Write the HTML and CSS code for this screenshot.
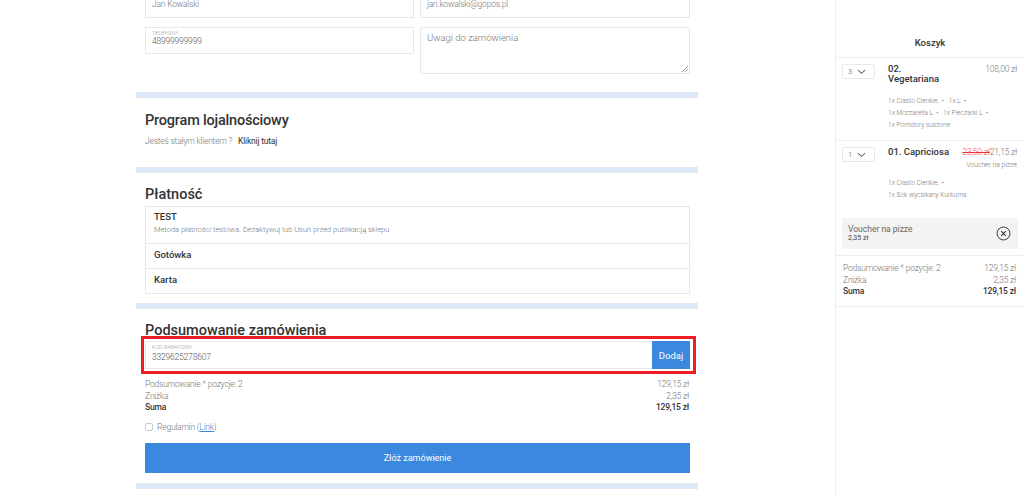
FILE: index.html
```html
<!DOCTYPE html>
<html lang="pl">
<head>
<meta charset="utf-8">
<title>Zamówienie</title>
<link rel="stylesheet" href="styles.css">
</head>
<body>
<div class="page">
  <main class="main">
    <section class="section contact">
      <div class="form-grid">
        <div class="field first"><span class="value">Jan Kowalski</span></div>
        <div class="field first"><span class="value">jan.kowalski@gopos.pl</span></div>
        <div class="field phone"><span class="mini">TELEFON*</span><span class="value dark">48999999999</span></div>
        <div class="field notes">Uwagi do zamówienia
          <svg class="grip" viewBox="0 0 6 6" width="6" height="6"><path d="M0 6L6 0M3 6L6 3" stroke="#999" stroke-width="1" fill="none"/></svg>
        </div>
      </div>
    </section>
    <div class="bar"></div>
    <section class="section loyalty">
      <h2>Program lojalnościowy</h2>
      <p class="loyal-line">Jesteś stałym klientem ? <a class="loyal-link">Kliknij tutaj</a></p>
    </section>
    <div class="bar"></div>
    <section class="section payment">
      <h2>Płatność</h2>
      <div class="pay-box">
        <div class="pay-row pay-test"><strong>TEST</strong><span>Metoda płatności testowa. Dezaktywuj lub Usuń przed publikacją sklepu</span></div>
        <div class="pay-row"><strong>Gotówka</strong></div>
        <div class="pay-row pay-last"><strong>Karta</strong></div>
      </div>
    </section>
    <div class="bar"></div>
    <section class="section summary">
      <h2>Podsumowanie zamówienia</h2>
      <div class="code-frame">
        <div class="code-row">
          <div class="code-input"><span class="mini">KOD RABATOWY</span><span class="value dark code-value">3329625278607</span></div>
          <button class="add">Dodaj</button>
        </div>
      </div>
      <div class="totals">
        <div class="line"><span>Podsumowanie * pozycje: 2</span><span>129,15 zł</span></div>
        <div class="line"><span>Zniżka</span><span>2,35 zł</span></div>
        <div class="line total"><span>Suma</span><span>129,15 zł</span></div>
      </div>
      <div class="terms"><span class="check"></span>Regulamin (<a class="link">Link</a>)</div>
      <button class="submit">Złóż zamówienie</button>
    </section>
    <div class="bar"></div>
  </main>
  <aside class="cart">
    <h3>Koszyk</h3>
    <div class="item item-one">
      <div class="qty"><span>3</span><svg viewBox="0 0 10 6" width="9" height="6"><path d="M1 1l4 3.5L9 1" fill="none" stroke="#666" stroke-width="1.2"/></svg></div>
      <div class="item-body">
        <div class="item-head"><b>02.<br>Vegetariana</b><span class="price">108,00 zł</span></div>
        <div class="mods">
          <div>1x Ciasto Cienkie, &nbsp;•&nbsp; &nbsp;1x L &nbsp;•</div>
          <div>1x Mozzarella L &nbsp;•&nbsp; &nbsp;1x Pieczarki L &nbsp;•</div>
          <div>1x Pomidory suszone</div>
        </div>
      </div>
    </div>
    <div class="item item-two">
      <div class="qty"><span>1</span><svg viewBox="0 0 10 6" width="9" height="6"><path d="M1 1l4 3.5L9 1" fill="none" stroke="#666" stroke-width="1.2"/></svg></div>
      <div class="item-body">
        <div class="item-head"><b>01. Capriciosa</b><span class="price"><s>23,50 zł</s>21,15 zł<small>Voucher na pizze</small></span></div>
        <div class="mods">
          <div>1x Ciasto Cienkie, &nbsp;•</div>
          <div>1x Sok wyciskany Kurkuma</div>
        </div>
      </div>
    </div>
    <div class="voucher">
      <div><div class="v-name">Voucher na pizze</div><div class="v-val">2,35 zł</div></div>
      <svg viewBox="0 0 16 16" width="15" height="15"><circle cx="8" cy="8" r="6.9" fill="none" stroke="#333" stroke-width="1"/><path d="M5.5 5.5l5 5M10.5 5.5l-5 5" stroke="#333" stroke-width="1.1"/></svg>
    </div>
    <div class="cart-totals">
      <div class="line"><span>Podsumowanie * pozycje: 2</span><span>129,15 zł</span></div>
      <div class="line"><span>Zniżka</span><span>2,35 zł</span></div>
      <div class="line total"><span>Suma</span><span>129,15 zł</span></div>
    </div>
  </aside>
</div>
</body>
</html>
```
FILE: styles.css
```css
* { box-sizing: border-box; }
html, body { margin: 0; height: 495px; overflow: hidden; background: #fff; }
body { font-family: Roboto, "Open Sans", sans-serif; font-size: 8.5px; font-weight: 300; color: #666; letter-spacing: -0.2px; }
.page { display: flex; align-items: flex-start; height: 495px; padding-left: 136px; }
.main { width: 562px; margin-top: -22px; flex: none; }
.section { padding: 0 8px 0 9px; }
.bar { height: 6px; background: #dde7f6; }
h2 { margin: 0; font-size: 14.5px; font-weight: 500; color: #333; line-height: 18px; letter-spacing: 0; }

.contact { height: 114px; padding-top: 10px; }
.form-grid { display: grid; grid-template-columns: 269px 270px; column-gap: 6px; row-gap: 9px; align-items: start; }
.field { border: 1px solid #e8e8e8; background: #fff; display: flex; flex-direction: column; position: relative; }
.first { height: 30px; padding: 9px 6px 0; }
.first .value { line-height: 12px; }
.phone { height: 27px; padding: 2px 6px; }
.notes { height: 47px; padding: 4px 6px; font-size: 9.5px; color: #777; border-radius: 2px; letter-spacing: 0; }
.grip { position: absolute; right: 1px; bottom: 1px; }
.mini { font-size: 5.5px; line-height: 6px; color: #999; letter-spacing: 0; }
.value { color: #777; }
.value.dark { color: #555; line-height: 10px; }
.code-value { margin-top: 2px; }

.loyalty { height: 69px; padding-top: 14px; }
.loyalty h2 { letter-spacing: -0.2px; }
.loyal-line { margin: 5px 0 0; line-height: 12px; color: #777; }
.loyal-link { color: #333; font-weight: 400; margin-left: 4px; }

.payment { height: 130px; padding-top: 13px; }
.pay-box { border: 1px solid #e8e8e8; margin-top: 2px; }
.pay-row { padding: 0 8px 3px; height: 25px; border-bottom: 1px solid #e8e8e8; display: flex; flex-direction: column; justify-content: center; }
.pay-row strong { font-weight: 500; font-size: 9.5px; color: #333; line-height: 12px; letter-spacing: 0; }
.pay-row span { font-size: 7.5px; line-height: 14px; color: #777; letter-spacing: 0; }
.pay-test { height: 37px; padding-bottom: 2px; }
.pay-last { height: 24px; padding-bottom: 2px; border-bottom: 0; }

.summary { height: 174px; padding-top: 13px; }
.code-frame { margin: -4px -6px 0 -4px; border: 3px solid #ee1c25; padding: 2px 3px 2px 1px; height: 38px; }
.code-row { display: flex; height: 28px; border: 1px solid #e8e8e8; }
.code-input { flex: 1; display: flex; flex-direction: column; padding: 2px 6px; }
.add { width: 38px; border: 0; background: #3a89de; color: #fff; font: 400 9.5px Roboto, sans-serif; margin: -1px -1px -1px 0; }
.totals { margin-top: 5px; padding-right: 1px; }
.line { display: flex; justify-content: space-between; line-height: 11.5px; color: #777; }
.total { color: #333; font-weight: 500; }
.terms { display: flex; align-items: center; margin-top: 7px; color: #777; line-height: 12px; }
.check { width: 8px; height: 8px; border: 1px solid #ccc; border-radius: 2px; margin-right: 4px; }
.link { color: #3a89de; text-decoration: underline; }
.submit { display: block; width: 100%; height: 30px; margin-top: 10px; border: 0; background: #3a89de; color: #fff; font: 400 9px Roboto, sans-serif; }

.cart { margin-left: 137px; width: 189px; height: 495px; border-left: 1px solid #e8eef6; flex: none; }
h3 { margin: 0; height: 58px; padding-top: 36px; line-height: 13px; text-align: center; font-size: 9.5px; font-weight: 500; color: #333; border-bottom: 1px solid #e8eef6; letter-spacing: 0; }
.item { display: flex; padding: 6px 7px 0 6px; }
.item-one { height: 83px; border-bottom: 1px solid #e8eef6; }
.item-two { height: 77px; }
.qty { width: 33px; height: 15px; border: 1px solid #e8e8e8; border-radius: 2px; display: flex; align-items: center; justify-content: space-between; padding: 0 8px 0 5px; flex: none; font-size: 7.5px; color: #555; }
.item-body { margin-left: 13px; flex: 1; min-width: 0; }
.item-head { display: flex; justify-content: space-between; }
.item-head b { font-weight: 500; font-size: 9.5px; line-height: 10px; color: #333; letter-spacing: 0; }
.price { font-size: 8.5px; color: #777; text-align: right; line-height: 10px; white-space: nowrap; }
.price s { color: #e55; text-decoration-color: #e33; }
.price small { display: block; font-size: 6.8px; line-height: 12px; margin-top: 2px; letter-spacing: 0; }
.mods { margin-top: 11px; color: #777; font-size: 6.6px; line-height: 12px; white-space: nowrap; letter-spacing: 0; }
.item-two .mods { margin-top: 6px; }
.voucher { margin: 0 6px; height: 31px; background: #f3f3f3; display: flex; align-items: center; justify-content: space-between; padding: 0 7px 0 6px; color: #555; }
.v-name { line-height: 10px; font-weight: 400; color: #666; letter-spacing: 0; }
.v-val { font-size: 7px; line-height: 9px; font-weight: 400; color: #444; letter-spacing: 0; }
.cart-totals { margin-top: 6px; padding: 7px 8px 9px 7px; border-top: 1px solid #e8eef6; border-bottom: 1px solid #e8eef6; height: 52px; }
```
